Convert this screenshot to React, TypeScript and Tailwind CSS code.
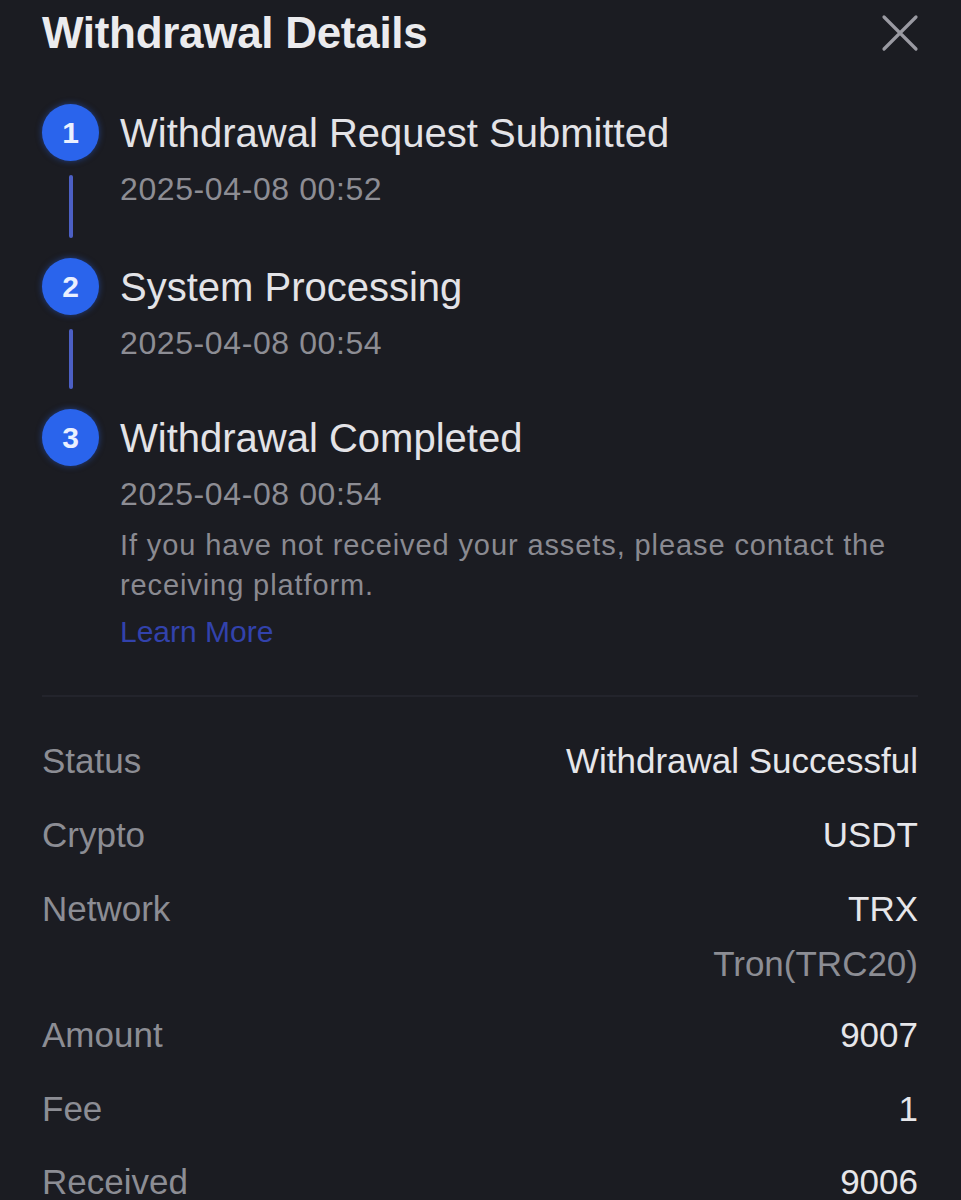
import React from "react";

const font = { fontFamily: '"Liberation Sans", Arial, sans-serif' };

function Circle({ n }: { n: number }) {
  return (
    <div className="w-[57px] h-[57px] shrink-0 rounded-full bg-[#2a64ec] flex items-center justify-center text-[30px] font-bold text-[#eaf0ff] shadow-[0_0_6px_rgba(42,100,236,0.5)]">
      {n}
    </div>
  );
}

function Step({
  n,
  title,
  date,
  last,
  pb,
  children,
}: {
  n: number;
  title: string;
  date: string;
  last?: boolean;
  pb?: string;
  children?: React.ReactNode;
}) {
  return (
    <div className="flex">
      <div className="w-[57px] flex flex-col items-center shrink-0">
        <Circle n={n} />
        {!last && <div className="w-[4px] flex-1 mt-[14px] mb-[20px] bg-[#4c5fc4] rounded-full" />}
      </div>
      <div className={`ml-[21px] flex flex-col ${pb ?? ""}`}>
        <div className="h-[57px] flex items-center text-[40px] text-[#e3e3e7] leading-none">{title}</div>
        <div className="mt-[11px] text-[32px] leading-[34px] tracking-[0.6px] text-[#8d8d94]">{date}</div>
        {children}
      </div>
    </div>
  );
}

function Row({ label, className, children }: { label: string; className?: string; children: React.ReactNode }) {
  return (
    <div className={`flex justify-between items-start ${className ?? ""}`}>
      <div className="text-[35px] leading-[40px] text-[#8c8d94]">{label}</div>
      <div className="flex flex-col items-end text-[35px] leading-[40px] text-[#e6e6ea]">{children}</div>
    </div>
  );
}

export default function App() {
  return (
    <div style={font} className="w-[961px] h-[1200px] overflow-hidden bg-[#1b1c22] pl-[42px] pr-[43px]">
      <div className="flex justify-between items-center pt-[4px] h-[62px]">
        <div className="text-[44px] font-bold text-[#ebebee] leading-none tracking-[-0.3px]">Withdrawal Details</div>
        <svg width="38" height="38" viewBox="0 0 38 38" className="mr-[-1px]">
          <path d="M3 3 L35 35 M35 3 L3 35" stroke="#9a9aa2" strokeWidth="3.2" strokeLinecap="round" />
        </svg>
      </div>
      <div className="mt-[42px] flex flex-col">
        <Step n={1} title="Withdrawal Request Submitted" date="2025-04-08 00:52" pb="pb-[52px]" />
        <Step n={2} title="System Processing" date="2025-04-08 00:54" pb="pb-[49px]" />
        <Step n={3} title="Withdrawal Completed" date="2025-04-08 00:54" last>
          <div className="mt-[14px] text-[29px] leading-[40px] tracking-[0.9px] text-[#8a8a91] pr-[10px]">
            If you have not received your assets, please contact the receiving platform.
          </div>
          <div className="mt-[7px] text-[30px] leading-[40px] text-[#3242ac]">Learn More</div>
        </Step>
      </div>
      <div className="mt-[43px] h-[2px] bg-[#23242c]" />
      <div className="mt-[44px] flex flex-col gap-[34px]">
        <Row label="Status">Withdrawal Successful</Row>
        <Row label="Crypto">USDT</Row>
        <Row label="Network">
          <div>TRX</div>
          <div className="mt-[15px] text-[#8c8d94]">Tron(TRC20)</div>
        </Row>
        <Row label="Amount" className="-mt-[3px]">9007</Row>
        <Row label="Fee">1</Row>
        <Row label="Received" className="-mt-[1px]">9006</Row>
      </div>
    </div>
  );
}
